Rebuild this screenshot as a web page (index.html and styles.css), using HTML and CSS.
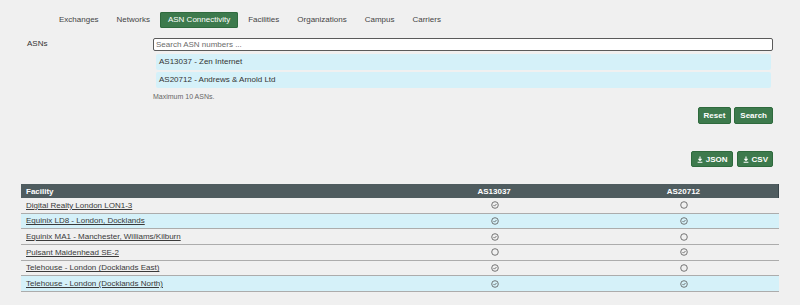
FILE: index.html
```html
<!DOCTYPE html>
<html lang="en">
<head>
<meta charset="utf-8">
<title>ASN Connectivity</title>
<link rel="stylesheet" href="styles.css">
</head>
<body>
<div class="page">
  <nav class="tabs">
    <a class="tab">Exchanges</a>
    <a class="tab">Networks</a>
    <a class="tab active">ASN Connectivity</a>
    <a class="tab">Facilities</a>
    <a class="tab">Organizations</a>
    <a class="tab">Campus</a>
    <a class="tab">Carriers</a>
  </nav>

  <div class="form-row">
    <label class="label-col">ASNs</label>
    <div class="field-col">
      <input class="search" type="text" placeholder="Search ASN numbers ...">
      <ul class="selected">
        <li>AS13037 - Zen Internet</li>
        <li>AS20712 - Andrews &amp; Arnold Ltd</li>
      </ul>
      <div class="hint">Maximum 10 ASNs.</div>
      <div class="actions">
        <button class="btn">Reset</button>
        <button class="btn">Search</button>
      </div>
      <div class="exports">
        <button class="btn btn-sm"><svg class="dl" viewBox="0 0 6 7"><path d="M3 0.6V4.4M1.4 2.9L3 4.5L4.6 2.9M0.6 6.2H5.4" /></svg>JSON</button>
        <button class="btn btn-sm"><svg class="dl" viewBox="0 0 6 7"><path d="M3 0.6V4.4M1.4 2.9L3 4.5L4.6 2.9M0.6 6.2H5.4" /></svg>CSV</button>
      </div>
    </div>
  </div>

  <div class="grid">
    <div class="row head">
      <div class="c-name">Facility</div>
      <div class="c-mid">AS13037</div>
      <div class="c-mid">AS20712</div>
    </div>
    <div class="row">
      <div class="c-name"><a>Digital Realty London LON1-3</a></div>
      <div class="c-mid"><svg class="ic" viewBox="0 0 8 8"><circle cx="4" cy="4" r="3.3"/><path d="M2.5 4.1L3.5 5.1L5.5 3"/></svg></div>
      <div class="c-mid"><svg class="ic" viewBox="0 0 8 8"><circle cx="4" cy="4" r="3.3"/></svg></div>
    </div>
    <div class="row hl">
      <div class="c-name"><a>Equinix LD8 - London, Docklands</a></div>
      <div class="c-mid"><svg class="ic" viewBox="0 0 8 8"><circle cx="4" cy="4" r="3.3"/><path d="M2.5 4.1L3.5 5.1L5.5 3"/></svg></div>
      <div class="c-mid"><svg class="ic" viewBox="0 0 8 8"><circle cx="4" cy="4" r="3.3"/><path d="M2.5 4.1L3.5 5.1L5.5 3"/></svg></div>
    </div>
    <div class="row">
      <div class="c-name"><a>Equinix MA1 - Manchester, Williams/Kilburn</a></div>
      <div class="c-mid"><svg class="ic" viewBox="0 0 8 8"><circle cx="4" cy="4" r="3.3"/><path d="M2.5 4.1L3.5 5.1L5.5 3"/></svg></div>
      <div class="c-mid"><svg class="ic" viewBox="0 0 8 8"><circle cx="4" cy="4" r="3.3"/></svg></div>
    </div>
    <div class="row">
      <div class="c-name"><a>Pulsant Maidenhead SE-2</a></div>
      <div class="c-mid"><svg class="ic" viewBox="0 0 8 8"><circle cx="4" cy="4" r="3.3"/></svg></div>
      <div class="c-mid"><svg class="ic" viewBox="0 0 8 8"><circle cx="4" cy="4" r="3.3"/><path d="M2.5 4.1L3.5 5.1L5.5 3"/></svg></div>
    </div>
    <div class="row">
      <div class="c-name"><a>Telehouse - London (Docklands East)</a></div>
      <div class="c-mid"><svg class="ic" viewBox="0 0 8 8"><circle cx="4" cy="4" r="3.3"/><path d="M2.5 4.1L3.5 5.1L5.5 3"/></svg></div>
      <div class="c-mid"><svg class="ic" viewBox="0 0 8 8"><circle cx="4" cy="4" r="3.3"/></svg></div>
    </div>
    <div class="row hl">
      <div class="c-name"><a>Telehouse - London (Docklands North)</a></div>
      <div class="c-mid"><svg class="ic" viewBox="0 0 8 8"><circle cx="4" cy="4" r="3.3"/><path d="M2.5 4.1L3.5 5.1L5.5 3"/></svg></div>
      <div class="c-mid"><svg class="ic" viewBox="0 0 8 8"><circle cx="4" cy="4" r="3.3"/><path d="M2.5 4.1L3.5 5.1L5.5 3"/></svg></div>
    </div>
  </div>
</div>
</body>
</html>
```

FILE: styles.css
```css
* { box-sizing: border-box; }

html, body {
  margin: 0;
  padding: 0;
  background: #f0f0f0;
  font-family: "Liberation Sans", Arial, sans-serif;
  font-size: 8px;
  color: #333;
}

.page {
  padding: 12px 21px 0 21px;
}

.tabs {
  display: flex;
  gap: 2px;
  padding-left: 30px;
  height: 16px;
}

.tab {
  display: block;
  padding: 0 8px;
  height: 16px;
  line-height: 16px;
  color: #444;
  border-radius: 2px;
}

.tab.active {
  background: #3d7a4d;
  color: #fff;
  box-shadow: inset 0 0 0 1px #2f6a3e;
}

.form-row {
  display: flex;
  margin-top: 10px;
}

.label-col {
  width: 126px;
  padding: 0 6px;
  line-height: 12px;
  color: #333;
}

.field-col {
  flex: 1;
  padding: 0 6px;
}

.search {
  display: block;
  width: 100%;
  height: 13px;
  margin: 0;
  padding: 0 2px;
  border: 1px solid #5a5a5a;
  border-radius: 2px;
  background: #fff;
  font-family: inherit;
  font-size: 8px;
  color: #333;
  outline: none;
}

.search::placeholder {
  color: #6b6b6b;
}

.selected {
  list-style: none;
  margin: 3px 2px 0 3px;
  padding: 0;
  display: flex;
  flex-direction: column;
  gap: 2px;
}

.selected li {
  height: 16px;
  line-height: 16px;
  padding-left: 3px;
  background: #d5f1f9;
  border-radius: 2px;
  color: #333;
}

.hint {
  margin-top: 4px;
  font-size: 7px;
  line-height: 10px;
  color: #666;
}

.actions {
  display: flex;
  justify-content: flex-end;
  gap: 3px;
  margin-top: 5px;
}

.btn {
  display: flex;
  align-items: center;
  gap: 3px;
  height: 17px;
  margin: 0;
  padding: 0 5px;
  border: 1px solid #2e6a3d;
  border-radius: 2px;
  background: #3d7a4d;
  color: #fff;
  font-family: inherit;
  font-size: 8px;
  font-weight: bold;
}

.exports {
  display: flex;
  justify-content: flex-end;
  gap: 4px;
  margin-top: 27px;
}

.btn-sm {
  height: 16px;
  padding: 0 4px 0 5px;
}

.dl {
  width: 6px;
  height: 7px;
  fill: none;
  stroke: #fff;
  stroke-width: 1.1;
}

.grid {
  margin-top: 17px;
}

.row {
  display: grid;
  grid-template-columns: 2fr 1fr 1fr;
  height: 15.67px;
  border-bottom: 1px solid #acacac;
  align-items: center;
}

.row.head {
  height: 14px;
  background: #4f5c5f;
  color: #fff;
  font-weight: bold;
  border-bottom: none;
  border-right: 1px solid #39454a;
}

.row.hl {
  background: #d5f1f9;
}

.c-name {
  padding-left: 5px;
  white-space: nowrap;
}

.c-name a {
  color: #3a3a3a;
  text-decoration: underline;
}

.c-mid {
  text-align: center;
  display: flex;
  justify-content: center;
  align-items: center;
}

.ic {
  width: 8px;
  height: 8px;
  fill: none;
  stroke: #555;
  stroke-width: 0.8;
}
```
